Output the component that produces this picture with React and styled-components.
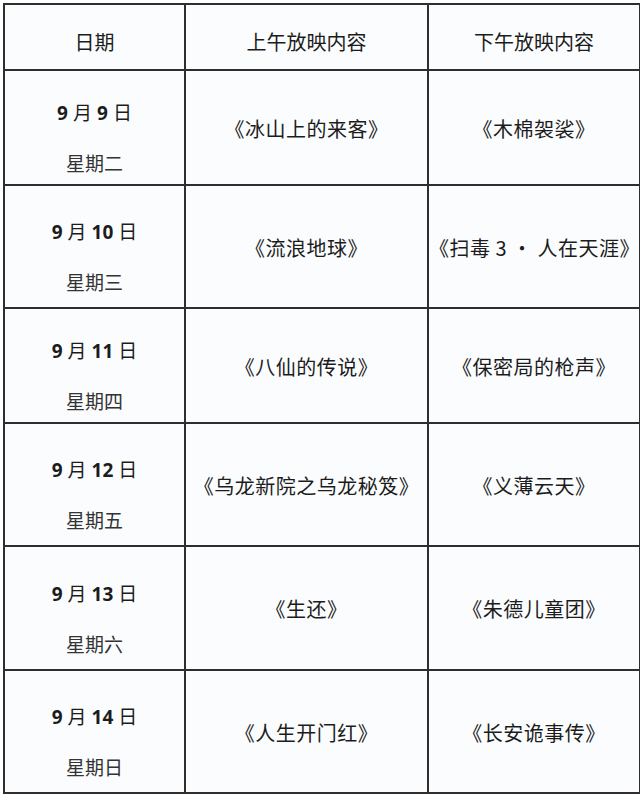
import React from "react";
import styled, { createGlobalStyle } from "styled-components";

const Global = createGlobalStyle`
  html, body { margin: 0; padding: 0; background: #ffffff; }
  body { font-family: "Noto Sans CJK SC", "Noto Sans", sans-serif; color: #222; }
`;

const Page = styled.div`
  width: 640px;
  height: 795px;
  padding: 3px 1px 0 3px;
  box-sizing: border-box;
  background: #ffffff;
`;

const Table = styled.table`
  width: 636px;
  border-collapse: collapse;
  table-layout: fixed;
  background: #fbfcfe;
`;

const Cell = styled.td`
  border: 2px solid #2e2e2e;
  text-align: center;
  vertical-align: middle;
  padding: 0;
  font-size: 20px;
  color: #1c1c1c;
  white-space: nowrap;
`;

const HeadCell = styled(Cell).attrs({ as: "th" })`
  font-weight: 400;
  height: 66px;
  padding-top: 8px;
  box-sizing: border-box;
`;

const Row = styled.tr`
  height: ${(p) => p.$h}px;
`;

const DateBox = styled.div`
  display: flex;
  flex-direction: column;
  align-items: center;
  gap: 24px;
  padding-top: 20px;
`;

const DateLine = styled.div`
  font-size: 19px;
  line-height: 26px;
  color: #1c1c1c;
  b {
    font-family: "Open Sans", "Noto Sans", sans-serif;
    font-weight: 700;
    font-size: 19px;
    margin: 0 5px;
  }
  b:first-child { margin-left: 0; }
`;

const WeekLine = styled.div`
  font-size: 19px;
  line-height: 26px;
  color: #333;
`;

const Title = styled.div`
  font-size: 20px;
  line-height: 26px;
  padding-top: 2px;
  letter-spacing: 0.5px;
`;

const rows = [
  { d: "9", w: "星期二", am: "《冰山上的来客》", pm: "《木棉袈裟》", h: 115 },
  { d: "10", w: "星期三", am: "《流浪地球》", pm: "《扫毒 3 · 人在天涯》", h: 123 },
  { d: "11", w: "星期四", am: "《八仙的传说》", pm: "《保密局的枪声》", h: 115 },
  { d: "12", w: "星期五", am: "《乌龙新院之乌龙秘笈》", pm: "《义薄云天》", h: 123 },
  { d: "13", w: "星期六", am: "《生还》", pm: "《朱德儿童团》", h: 124 },
  { d: "14", w: "星期日", am: "《人生开门红》", pm: "《长安诡事传》", h: 123 },
];

export default function App() {
  return (
    <Page>
      <Global />
      <Table>
        <colgroup>
          <col style={{ width: 181 }} />
          <col style={{ width: 243 }} />
          <col style={{ width: 212 }} />
        </colgroup>
        <thead>
          <tr>
            <HeadCell>日期</HeadCell>
            <HeadCell>上午放映内容</HeadCell>
            <HeadCell>下午放映内容</HeadCell>
          </tr>
        </thead>
        <tbody>
          {rows.map((r) => (
            <Row key={r.d} $h={r.h}>
              <Cell>
                <DateBox>
                  <DateLine>
                    <b>9</b>月<b>{r.d}</b>日
                  </DateLine>
                  <WeekLine>{r.w}</WeekLine>
                </DateBox>
              </Cell>
              <Cell>
                <Title>{r.am}</Title>
              </Cell>
              <Cell>
                <Title>{r.pm}</Title>
              </Cell>
            </Row>
          ))}
        </tbody>
      </Table>
    </Page>
  );
}
